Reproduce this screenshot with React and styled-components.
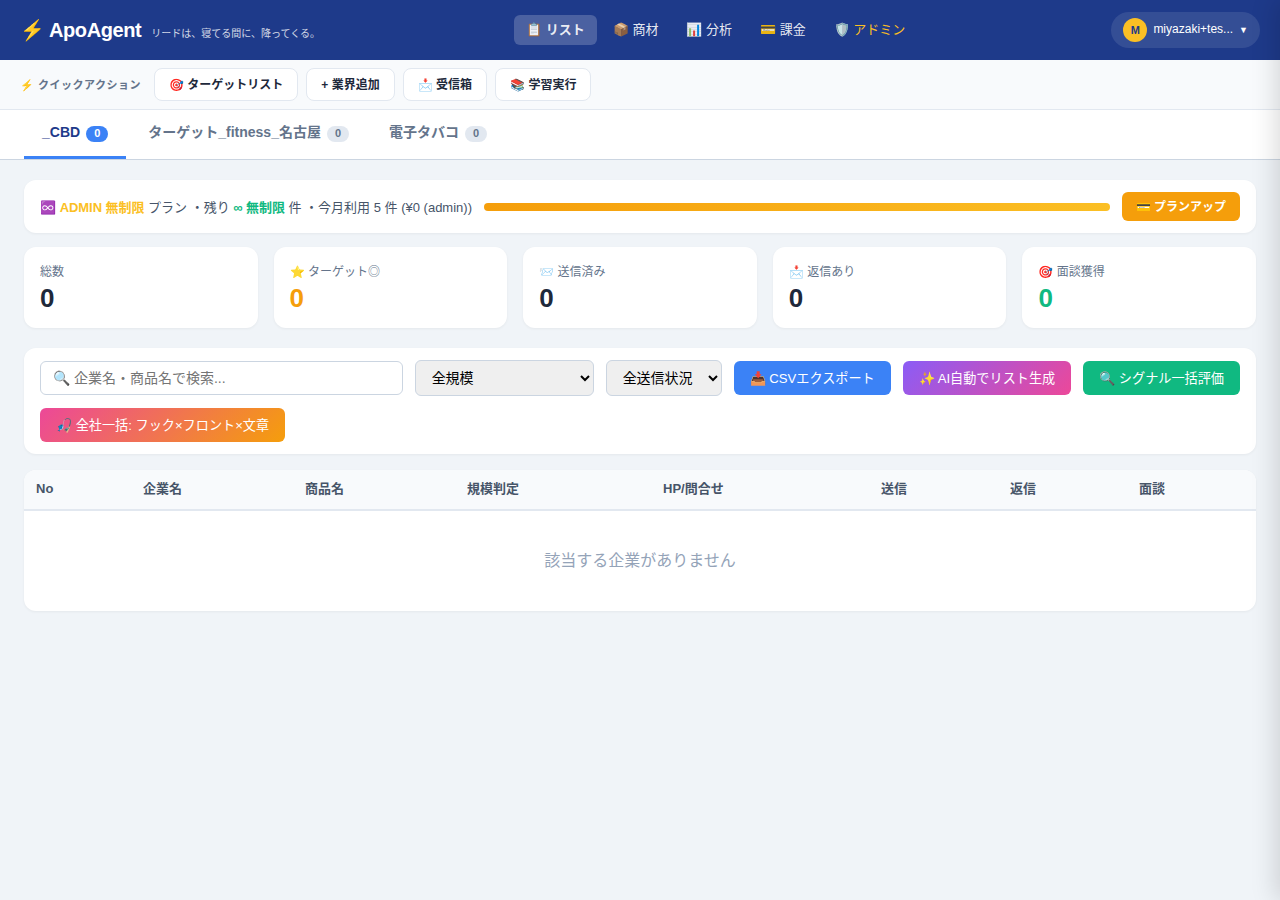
import React from 'react';
import styled, { createGlobalStyle } from 'styled-components';

const GlobalStyle = createGlobalStyle`
  * { box-sizing: border-box; }
  body {
    margin: 0;
    background: #f0f4f8;
    color: #1e293b;
    font-family: "Liberation Sans", "Noto Sans CJK JP", sans-serif;
    font-size: 14px;
    line-height: 1.15;
  }
  button, select, input {
    font-family: inherit;
    line-height: inherit;
  }
`;

const Header = styled.header`
  height: 60px;
  background: #1e3a8a;
  color: white;
  display: flex;
  justify-content: space-between;
  align-items: center;
  padding: 0 20px;
`;

const Brand = styled.div`
  display: flex;
  align-items: baseline;
  gap: 10px;
`;

const Logo = styled.div`
  font-size: 20px;
  font-weight: 700;
  letter-spacing: -0.4px;
`;

const Tagline = styled.span`
  font-size: 10px;
  opacity: 0.8;
`;

const Nav = styled.nav`
  display: flex;
  gap: 4px;
`;

const NavItem = styled.a`
  height: 30px;
  padding: 0 12px;
  display: flex;
  align-items: center;
  border-radius: 6px;
  font-size: 13px;
  font-weight: ${(props) => (props.$active ? 700 : 400)};
  color: ${(props) => (props.$admin ? '#fbbf24' : 'rgba(255,255,255,0.9)')};
  background: ${(props) => (props.$active ? 'rgba(255,255,255,0.2)' : 'transparent')};
`;

const UserPill = styled.div`
  height: 36px;
  padding: 0 12px;
  display: flex;
  align-items: center;
  gap: 6px;
  border-radius: 18px;
  background: rgba(255,255,255,0.1);
  font-size: 12px;
`;

const Avatar = styled.div`
  width: 24px;
  height: 24px;
  border-radius: 50%;
  background: #fbbf24;
  color: #1e3a8a;
  font-size: 11px;
  font-weight: 700;
  display: flex;
  align-items: center;
  justify-content: center;
`;

const Caret = styled.span`
  font-size: 9px;
`;

const QuickBar = styled.div`
  height: 50px;
  padding: 0 20px;
  display: flex;
  align-items: center;
  gap: 8px;
  background: #f8fafc;
  border-bottom: 1px solid #e2e8f0;
`;

const QuickLabel = styled.span`
  padding-top: 2px;
  font-size: 11px;
  font-weight: 600;
  color: #64748b;
  letter-spacing: 0.5px;
  margin-right: 5px;
`;

const QuickButton = styled.button`
  height: 33px;
  padding: 2px 14px 0;
  background: white;
  border: 1px solid #e2e8f0;
  border-radius: 8px;
  color: #1e293b;
  font-size: 12px;
  font-weight: 600;
`;

const Tabs = styled.div`
  height: 50px;
  padding: 0 24px;
  display: flex;
  background: white;
  border-bottom: 1px solid #cbd5e1;
`;

const Tab = styled.div`
  height: 49px;
  padding: 0 18px 1px;
  margin-right: 4px;
  display: flex;
  align-items: center;
  gap: 6px;
  font-size: 14px;
  font-weight: 600;
  color: ${(props) => (props.$active ? '#1e3a8a' : '#64748b')};
  border-bottom: 3px solid ${(props) => (props.$active ? '#3b82f6' : 'transparent')};
`;

const TabCount = styled.span`
  height: 16px;
  min-width: 22px;
  margin-top: 2px;
  padding: 0 8px;
  border-radius: 8px;
  display: flex;
  align-items: center;
  justify-content: center;
  font-size: 11px;
  font-weight: 600;
  background: ${(props) => (props.$active ? '#3b82f6' : '#e2e8f0')};
  color: ${(props) => (props.$active ? 'white' : '#64748b')};
`;

const Main = styled.main`
  padding: 20px 24px;
`;

const Card = styled.section`
  background: white;
  border-radius: 12px;
  box-shadow: 0 1px 3px rgba(0,0,0,0.05);
`;

const PlanCard = styled(Card)`
  height: 53px;
  padding: 0 16px;
  display: flex;
  align-items: center;
  gap: 12px;
  margin-bottom: 14px;
`;

const PlanText = styled.div`
  padding-top: 3px;
  font-size: 13px;
  color: #475569;
  white-space: nowrap;
`;

const Strong = styled.b`
  color: ${(props) => props.$color};
  letter-spacing: -0.05px;
`;

const PlanTrack = styled.div`
  flex: 1;
  height: 8px;
  border-radius: 4px;
  background: linear-gradient(90deg, #f59e0b, #fbbf24);
`;

const PlanButton = styled.button`
  height: 29px;
  padding: 2px 14px 0;
  border: none;
  border-radius: 6px;
  background: #f59e0b;
  color: white;
  font-size: 12px;
  font-weight: 600;
`;

const StatsGrid = styled.div`
  display: grid;
  grid-template-columns: repeat(5, 1fr);
  gap: 16px;
  margin-bottom: 20px;
`;

const StatCard = styled(Card)`
  height: 81px;
  padding: 17px 16px 16px;
`;

const StatLabel = styled.div`
  font-size: 12px;
  line-height: 16px;
  color: #64748b;
  margin-bottom: 3px;
`;

const StatValue = styled.div`
  font-size: 26px;
  line-height: 30px;
  font-weight: 700;
  color: ${(props) => props.$color || '#1e293b'};
`;

const FilterCard = styled(Card)`
  padding: 12px 16px;
  display: flex;
  flex-wrap: wrap;
  align-items: center;
  gap: 12px;
  margin-bottom: 16px;
`;

const SearchInput = styled.input`
  flex: 1;
  min-width: 300px;
  height: 34px;
  padding: 0 12px;
  border: 1px solid #cbd5e1;
  border-radius: 6px;
  font-size: 14px;
  &::placeholder { color: #757575; }
`;

const Select = styled.select`
  height: 36px;
  width: ${(props) => props.$width}px;
  padding: 0 12px;
  border: 1px solid #cbd5e1;
  border-radius: 6px;
  background-color: #efefef;
  color: black;
  font-size: 14px;
`;

const ActionButton = styled.button`
  height: 34px;
  padding: 2px 16px 0;
  border: none;
  border-radius: 6px;
  color: white;
  font-size: 13.15px;
  background: ${(props) => props.$bg};
`;

const TableCard = styled(Card)`
  overflow: hidden;
`;

const Table = styled.table`
  width: 100%;
  border-collapse: collapse;
  table-layout: fixed;
`;

const Th = styled.th`
  height: 40px;
  padding: 0 12px;
  width: ${(props) => props.$width}px;
  text-align: left;
  vertical-align: middle;
  font-size: 13px;
  font-weight: 600;
  color: #475569;
  background: #f8fafc;
  border-bottom: 2px solid #e2e8f0;
`;

const EmptyCell = styled.td`
  height: 101px;
  text-align: center;
  font-size: 16px;
  color: #94a3b8;
`;

// closed side panel, only its shadow shows at the right edge
const Drawer = styled.aside`
  position: fixed;
  top: 0;
  bottom: 0;
  right: -400px;
  width: 400px;
  background: white;
  box-shadow: -4px 0 24px rgba(0,0,0,0.15);
`;

const navItems = [
  { label: '📋 リスト', active: true },
  { label: '📦 商材' },
  { label: '📊 分析' },
  { label: '💳 課金' },
  { label: '🛡️ アドミン', admin: true }
];

const quickActions = ['🎯 ターゲットリスト', '+ 業界追加', '📩 受信箱', '📚 学習実行'];

const tabs = [
  { label: '_CBD', active: true },
  { label: 'ターゲット_fitness_名古屋' },
  { label: '電子タバコ' }
];

const stats = [
  { label: '総数' },
  { label: '⭐ ターゲット◎', color: '#f59e0b' },
  { label: '📨 送信済み' },
  { label: '📩 返信あり' },
  { label: '🎯 面談獲得', color: '#10b981' }
];

const columns = [
  { label: 'No', width: 107 },
  { label: '企業名', width: 162 },
  { label: '商品名', width: 162 },
  { label: '規模判定', width: 196 },
  { label: 'HP/問合せ', width: 218 },
  { label: '送信', width: 129 },
  { label: '返信', width: 129 },
  { label: '面談', width: 129 }
];

function App() {
  return (
    <>
      <GlobalStyle />
      <Header>
        <Brand>
          <Logo>⚡ ApoAgent</Logo>
          <Tagline>リードは、寝てる間に、降ってくる。</Tagline>
        </Brand>
        <Nav>
          {navItems.map((item) => (
            <NavItem key={item.label} $active={item.active} $admin={item.admin}>{item.label}</NavItem>
          ))}
        </Nav>
        <UserPill>
          <Avatar>M</Avatar>
          <span>miyazaki+tes...</span>
          <Caret>▼</Caret>
        </UserPill>
      </Header>
      <QuickBar>
        <QuickLabel>⚡ クイックアクション</QuickLabel>
        {quickActions.map((label) => <QuickButton key={label}>{label}</QuickButton>)}
      </QuickBar>
      <Tabs>
        {tabs.map((tab) => (
          <Tab key={tab.label} $active={tab.active}>
            {tab.label}
            <TabCount $active={tab.active}>0</TabCount>
          </Tab>
        ))}
      </Tabs>
      <Main>
        <PlanCard>
          <PlanText>
            ♾️ <Strong $color="#fbbf24">ADMIN 無制限</Strong> プラン ・残り <Strong $color="#10b981">∞ 無制限</Strong> 件 ・今月利用 5 件 (¥0 (admin))
          </PlanText>
          <PlanTrack />
          <PlanButton>💳 プランアップ</PlanButton>
        </PlanCard>
        <StatsGrid>
          {stats.map((stat) => (
            <StatCard key={stat.label}>
              <StatLabel>{stat.label}</StatLabel>
              <StatValue $color={stat.color}>0</StatValue>
            </StatCard>
          ))}
        </StatsGrid>
        <FilterCard>
          <SearchInput placeholder="🔍 企業名・商品名で検索..." />
          <Select $width={179}><option>全規模</option></Select>
          <Select $width={116}><option>全送信状況</option></Select>
          <ActionButton $bg="#3b82f6">📥 CSVエクスポート</ActionButton>
          <ActionButton $bg="linear-gradient(135deg, #8b5cf6, #ec4899)">✨ AI自動でリスト生成</ActionButton>
          <ActionButton $bg="#10b981">🔍 シグナル一括評価</ActionButton>
          <ActionButton $bg="linear-gradient(135deg, #ec4899, #f59e0b)">🎣 全社一括: フック×フロント×文章</ActionButton>
        </FilterCard>
        <TableCard>
          <Table>
            <thead>
              <tr>
                {columns.map((col) => <Th key={col.label} $width={col.width}>{col.label}</Th>)}
              </tr>
            </thead>
            <tbody>
              <tr>
                <EmptyCell colSpan={columns.length}>該当する企業がありません</EmptyCell>
              </tr>
            </tbody>
          </Table>
        </TableCard>
      </Main>
      <Drawer />
    </>
  );
}

export default App;
